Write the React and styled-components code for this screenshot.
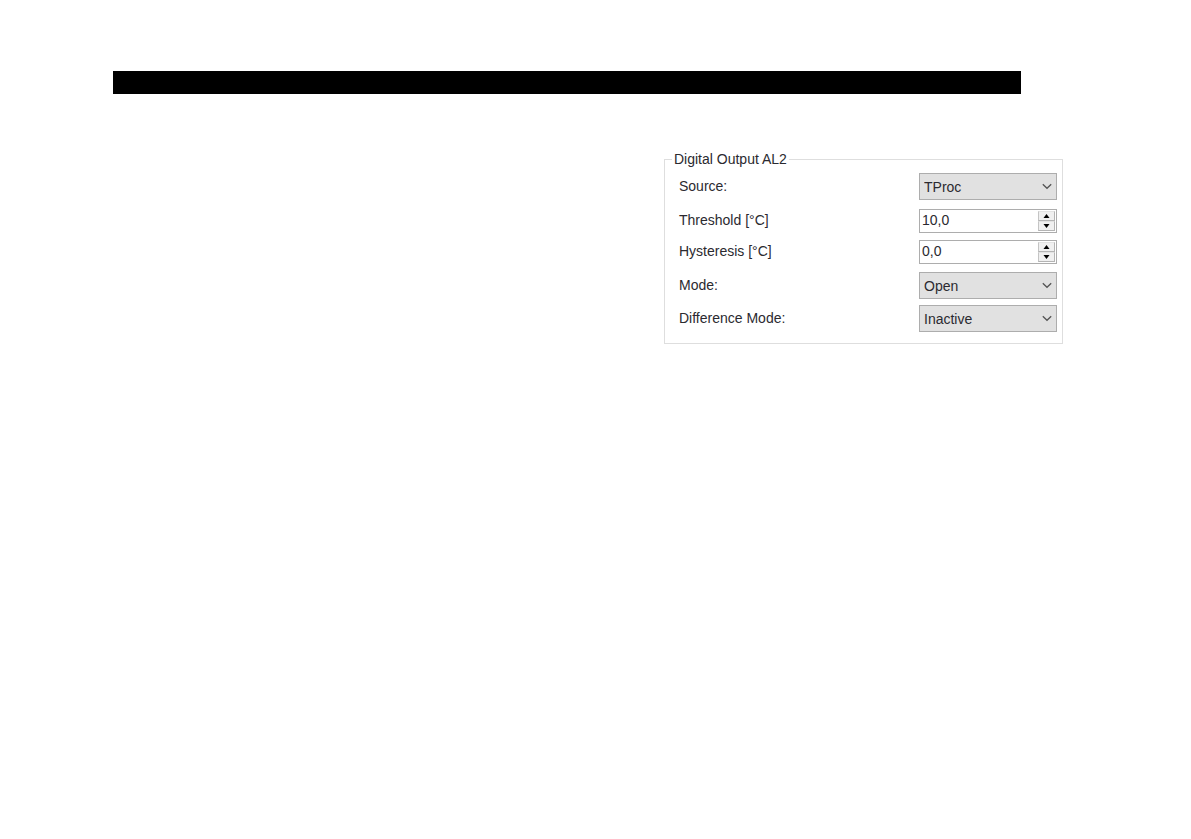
import React, { useState } from "react";
import styled, { createGlobalStyle } from "styled-components";

const GlobalStyle = createGlobalStyle`
  body {
    margin: 0;
    background: #ffffff;
  }
  * {
    box-sizing: border-box;
  }
`;
const Page = styled.main`
  display: flex;
  flex-direction: column;
  padding: 71px 128px 71px 113px;
  font-family: "Liberation Sans", Arial, sans-serif;
  font-size: 14px;
  line-height: 16px;
  color: #2b2a30;
`;
const Bar = styled.header`
  height: 23px;
  margin-right: 42px;
  background: #000000;
`;
const Group = styled.fieldset`
  align-self: flex-end;
  width: 42%;
  min-width: 300px;
  margin: 57px 0 0;
  padding: 3px 5px 8px 7px;
  border: 1px solid #dedede;
`;
const Legend = styled.legend`
  padding: 0 2px;
`;
const Rows = styled.div`
  display: flex;
  flex-direction: column;
  gap: 2px;
`;
const Row = styled.div`
  display: flex;
  align-items: center;
  justify-content: space-between;
  height: ${p => (p.$compact ? "31px" : "33px")};
  padding-left: 7px;
`;
const Label = styled.label`
  padding-bottom: 2px;
`;
const SelectWrap = styled.div`
  position: relative;
  width: 138px;
  height: 27px;
`;
const Select = styled.select`
  appearance: none;
  width: 100%;
  height: 100%;
  padding: 0 24px 0 4px;
  border: 1px solid #adadad;
  border-radius: 0;
  background: #e1e1e1;
  font: inherit;
  color: inherit;
`;
const Chevron = styled.svg`
  position: absolute;
  top: 10px;
  right: 5px;
  pointer-events: none;
`;
const Spin = styled.div`
  display: flex;
  width: 138px;
  height: 24px;
  padding: 1px;
  border: 1px solid #adadad;
  background: #ffffff;
`;
const SpinInput = styled.input`
  flex: 1;
  min-width: 0;
  padding: 0 0 2px 1px;
  border: none;
  outline: none;
  background: transparent;
  font: inherit;
  color: inherit;
`;
const SpinButtons = styled.div`
  display: flex;
  flex-direction: column;
  width: 17px;
`;
const SpinButton = styled.button`
  display: flex;
  flex: 1;
  align-items: center;
  justify-content: center;
  padding: 0;
  border: 1px solid;
  border-color: #e3e3e3 #b4b4b4 #b4b4b4 #c4c4c4;
  background: #f0f0f0;
`;

const SelectRow = ({ id, label, options }) => (
  <Row>
    <Label htmlFor={id}>{label}</Label>
    <SelectWrap>
      <Select id={id} defaultValue={options[0]}>
        {options.map(option => (
          <option key={option}>{option}</option>
        ))}
      </Select>
      <Chevron width="10" height="7" viewBox="0 0 10 7" aria-hidden="true">
        <path d="M0.8 1.2 L5 5.3 L9.2 1.2" fill="none" stroke="#555555" strokeWidth="1.3" />
      </Chevron>
    </SelectWrap>
  </Row>
);

const SpinRow = ({ id, label, initial }) => {
  const [value, setValue] = useState(initial);
  const step = delta => {
    const current = parseFloat(value.replace(",", ".")) || 0;
    setValue((current + delta).toFixed(1).replace(".", ","));
  };
  return (
    <Row $compact>
      <Label htmlFor={id}>{label}</Label>
      <Spin>
        <SpinInput id={id} value={value} onChange={e => setValue(e.target.value)} />
        <SpinButtons>
          <SpinButton type="button" aria-label="Increase" onClick={() => step(0.1)}>
            <svg width="7" height="4" viewBox="0 0 7 4">
              <path d="M0.5 4 L3.5 0 L6.5 4 Z" fill="#000000" />
            </svg>
          </SpinButton>
          <SpinButton type="button" aria-label="Decrease" onClick={() => step(-0.1)}>
            <svg width="7" height="4" viewBox="0 0 7 4">
              <path d="M0.5 0 L3.5 4 L6.5 0 Z" fill="#000000" />
            </svg>
          </SpinButton>
        </SpinButtons>
      </Spin>
    </Row>
  );
};

const App = () => (
  <>
    <GlobalStyle />
    <Page>
      <Bar />
      <Group>
        <Legend>Digital Output AL2</Legend>
        <Rows>
          <SelectRow id="source" label="Source:" options={["TProc"]} />
          <div>
            <SpinRow id="threshold" label="Threshold [°C]" initial="10,0" />
            <SpinRow id="hysteresis" label="Hysteresis [°C]" initial="0,0" />
          </div>
          <div>
            <SelectRow id="mode" label="Mode:" options={["Open"]} />
            <SelectRow id="difference" label="Difference Mode:" options={["Inactive"]} />
          </div>
        </Rows>
      </Group>
    </Page>
  </>
);

export default App;
